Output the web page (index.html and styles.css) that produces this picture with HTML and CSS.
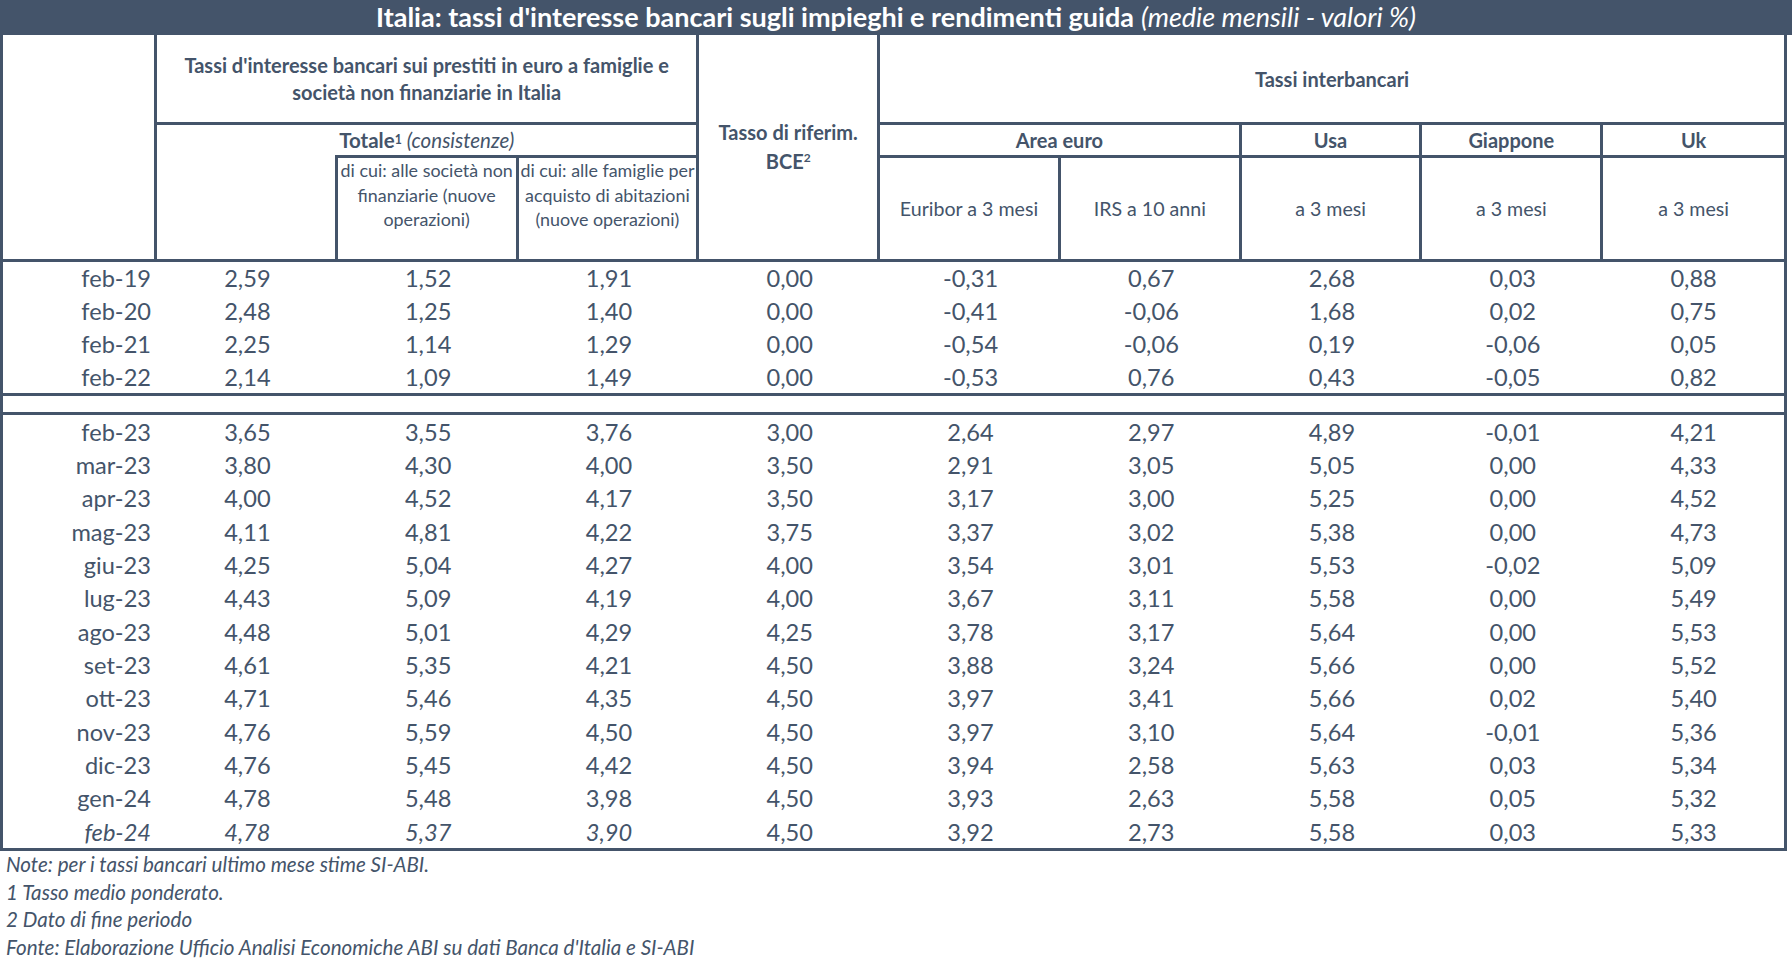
FILE: index.html
```html
<!DOCTYPE html>
<html lang="it">
<head>
<meta charset="utf-8">
<title>Italia: tassi d'interesse bancari</title>
<link rel="stylesheet" href="styles.css">
</head>
<body>
<div class="page">
  <div class="title"><b>Italia: tassi d'interesse bancari sugli impieghi e rendimenti guida</b> <i>(medie mensili - valori %)</i></div>
  <div class="table">
    <div class="hdr">
      <div class="c a br bb"></div>
      <div class="c b br bb bold">Tassi d'interesse bancari sui prestiti in euro a famiglie e<br>società non finanziarie in Italia</div>
      <div class="c cc br bb bold"><span>Tasso di riferim.<br>BCE<sup>2</sup></span></div>
      <div class="c d bb bold">Tassi interbancari</div>
      <div class="c e br bold partial">Totale<sup>1</sup>&nbsp;<i class="reg">(consistenze)</i></div>
      <div class="c f br bb"></div>
      <div class="c g br bb small top">di cui: alle società non<br>finanziarie (nuove<br>operazioni)</div>
      <div class="c h br bb small top">di cui: alle famiglie per<br>acquisto di abitazioni<br>(nuove operazioni)</div>
      <div class="c i br bb bold">Area euro</div>
      <div class="c j br bb bold">Usa</div>
      <div class="c k br bb bold">Giappone</div>
      <div class="c l bb bold">Uk</div>
      <div class="c m br bb">Euribor a 3 mesi</div>
      <div class="c n br bb">IRS a 10 anni</div>
      <div class="c o br bb">a 3 mesi</div>
      <div class="c p br bb">a 3 mesi</div>
      <div class="c q bb">a 3 mesi</div>
    </div>
    <div class="block top-block">
      <div class="row"><span class="date">feb-19</span><span>2,59</span><span>1,52</span><span>1,91</span><span>0,00</span><span>-0,31</span><span>0,67</span><span>2,68</span><span>0,03</span><span>0,88</span></div>
      <div class="row"><span class="date">feb-20</span><span>2,48</span><span>1,25</span><span>1,40</span><span>0,00</span><span>-0,41</span><span>-0,06</span><span>1,68</span><span>0,02</span><span>0,75</span></div>
      <div class="row"><span class="date">feb-21</span><span>2,25</span><span>1,14</span><span>1,29</span><span>0,00</span><span>-0,54</span><span>-0,06</span><span>0,19</span><span>-0,06</span><span>0,05</span></div>
      <div class="row"><span class="date">feb-22</span><span>2,14</span><span>1,09</span><span>1,49</span><span>0,00</span><span>-0,53</span><span>0,76</span><span>0,43</span><span>-0,05</span><span>0,82</span></div>
    </div>
    <div class="sep"></div>
    <div class="block bottom-block">
      <div class="row"><span class="date">feb-23</span><span>3,65</span><span>3,55</span><span>3,76</span><span>3,00</span><span>2,64</span><span>2,97</span><span>4,89</span><span>-0,01</span><span>4,21</span></div>
      <div class="row"><span class="date">mar-23</span><span>3,80</span><span>4,30</span><span>4,00</span><span>3,50</span><span>2,91</span><span>3,05</span><span>5,05</span><span>0,00</span><span>4,33</span></div>
      <div class="row"><span class="date">apr-23</span><span>4,00</span><span>4,52</span><span>4,17</span><span>3,50</span><span>3,17</span><span>3,00</span><span>5,25</span><span>0,00</span><span>4,52</span></div>
      <div class="row"><span class="date">mag-23</span><span>4,11</span><span>4,81</span><span>4,22</span><span>3,75</span><span>3,37</span><span>3,02</span><span>5,38</span><span>0,00</span><span>4,73</span></div>
      <div class="row"><span class="date">giu-23</span><span>4,25</span><span>5,04</span><span>4,27</span><span>4,00</span><span>3,54</span><span>3,01</span><span>5,53</span><span>-0,02</span><span>5,09</span></div>
      <div class="row"><span class="date">lug-23</span><span>4,43</span><span>5,09</span><span>4,19</span><span>4,00</span><span>3,67</span><span>3,11</span><span>5,58</span><span>0,00</span><span>5,49</span></div>
      <div class="row"><span class="date">ago-23</span><span>4,48</span><span>5,01</span><span>4,29</span><span>4,25</span><span>3,78</span><span>3,17</span><span>5,64</span><span>0,00</span><span>5,53</span></div>
      <div class="row"><span class="date">set-23</span><span>4,61</span><span>5,35</span><span>4,21</span><span>4,50</span><span>3,88</span><span>3,24</span><span>5,66</span><span>0,00</span><span>5,52</span></div>
      <div class="row"><span class="date">ott-23</span><span>4,71</span><span>5,46</span><span>4,35</span><span>4,50</span><span>3,97</span><span>3,41</span><span>5,66</span><span>0,02</span><span>5,40</span></div>
      <div class="row"><span class="date">nov-23</span><span>4,76</span><span>5,59</span><span>4,50</span><span>4,50</span><span>3,97</span><span>3,10</span><span>5,64</span><span>-0,01</span><span>5,36</span></div>
      <div class="row"><span class="date">dic-23</span><span>4,76</span><span>5,45</span><span>4,42</span><span>4,50</span><span>3,94</span><span>2,58</span><span>5,63</span><span>0,03</span><span>5,34</span></div>
      <div class="row"><span class="date">gen-24</span><span>4,78</span><span>5,48</span><span>3,98</span><span>4,50</span><span>3,93</span><span>2,63</span><span>5,58</span><span>0,05</span><span>5,32</span></div>
      <div class="row"><span class="date it">feb-24</span><span class="it">4,78</span><span class="it">5,37</span><span class="it">3,90</span><span>4,50</span><span>3,92</span><span>2,73</span><span>5,58</span><span>0,03</span><span>5,33</span></div>
    </div>
  </div>
  <div class="notes">
    <p>Note: per i tassi bancari ultimo mese stime SI-ABI.</p>
    <p>1 Tasso medio ponderato.</p>
    <p>2 Dato di fine periodo</p>
    <p>Fonte: Elaborazione Ufficio Analisi Economiche ABI su dati Banca d'Italia e SI-ABI</p>
  </div>
</div>
</body>
</html>
```

FILE: styles.css
```css
* { box-sizing: border-box; }
html, body { margin: 0; padding: 0; background: #ffffff; }
body {
  font-family: Lato, "Open Sans", "Liberation Sans", sans-serif;
  color: #44546a;
  width: 1792px;
  height: 976px;
  overflow: hidden;
}
.page { width: 1792px; }

.title {
  height: 35px;
  background: #44546a;
  color: #ffffff;
  font-size: 27px;
  line-height: 34px;
  text-align: center;
  white-space: nowrap;
}
.title b { font-weight: 700; }
.title i { font-weight: 400; }

.table {
  width: 1787px;
  border-left: 3px solid #44546a;
  border-right: 3px solid #44546a;
  border-bottom: 3px solid #44546a;
}

.hdr {
  display: grid;
  grid-template-columns: 154px repeat(9, 1fr);
  grid-template-rows: 90px 33px 104px;
}
.c {
  display: flex;
  align-items: center;
  justify-content: center;
  text-align: center;
  font-size: 19.6px;
  line-height: 26px;
}
.br { border-right: 3px solid #44546a; }
.bb { border-bottom: 3px solid #44546a; }
.bold { font-weight: 700; font-size: 20px; }
.reg { font-weight: 400; }
.small { font-size: 17.9px; line-height: 24.7px; }
.top { align-items: flex-start; }

.c sup { font-size: 0.6em; line-height: 0; vertical-align: 0.6em; }

.a { grid-column: 1; grid-row: 1 / 4; }
.b { grid-column: 2 / 5; grid-row: 1; line-height: 26.4px; }
.cc { grid-column: 5; grid-row: 1 / 4; line-height: 29.5px; }
.d { grid-column: 6 / 11; grid-row: 1; }
.e { grid-column: 2 / 5; grid-row: 2; font-size: 20.5px;
  background: linear-gradient(#44546a, #44546a) right bottom / calc((100% + 3px) * 2 / 3) 3px no-repeat;
  padding-bottom: 3px;
}
.f { grid-column: 2; grid-row: 3; }
.g { grid-column: 3; grid-row: 3; }
.h { grid-column: 4; grid-row: 3; }
.i { grid-column: 6 / 8; grid-row: 2; }
.j { grid-column: 8; grid-row: 2; }
.k { grid-column: 9; grid-row: 2; }
.l { grid-column: 10; grid-row: 2; }
.m { grid-column: 6; grid-row: 3; }
.n { grid-column: 7; grid-row: 3; }
.o { grid-column: 8; grid-row: 3; }
.p { grid-column: 9; grid-row: 3; }
.q { grid-column: 10; grid-row: 3; }

.row {
  display: grid;
  grid-template-columns: 154px repeat(9, 1fr);
  font-size: 23.6px;
  align-items: center;
  text-align: center;
}
.top-block .row { height: 32.75px; }
.bottom-block .row { height: 33.35px; }
.row .date { text-align: right; padding-right: 6px; }
.row .it { font-style: italic; }

.sep {
  height: 22px;
  border-top: 3px solid #44546a;
  border-bottom: 3px solid #44546a;
}

.notes {
  padding-left: 6px;
  font-style: italic;
  font-size: 20.6px;
  line-height: 27.4px;
}
.notes p { margin: 0; }
```
